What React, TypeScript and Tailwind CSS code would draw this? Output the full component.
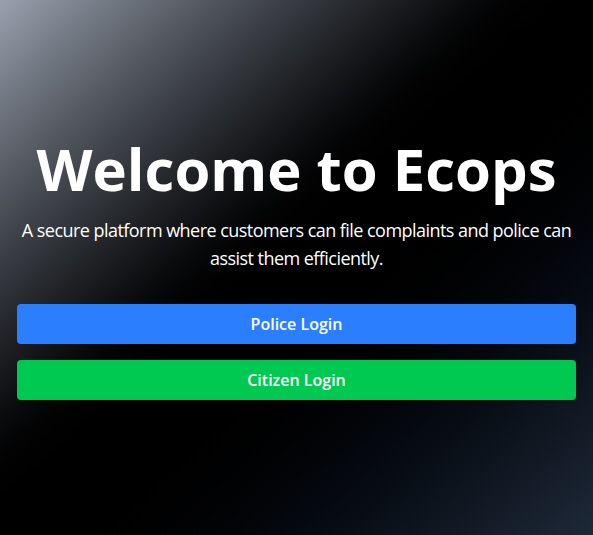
export default function App() {
  return (
    <div
      className="min-h-screen flex flex-col items-center justify-center px-[17px] pt-1 text-white bg-linear-to-br from-gray-400 via-black to-gray-800"
      style={{ fontFamily: '"Open Sans", "Noto Sans", sans-serif' }}
    >
      <h1 className="text-[58px] font-bold leading-none mb-[18px] text-center">
        Welcome to Ecops
      </h1>
      <p className="text-lg leading-7 tracking-[-0.03em] text-center mb-8">
        A secure platform where customers can file complaints and police can
        assist them efficiently.
      </p>
      <div className="w-full flex flex-col gap-4">
        <button
          type="button"
          className="w-full h-10 rounded bg-blue-500 text-white font-semibold"
        >
          Police Login
        </button>
        <button
          type="button"
          className="w-full h-10 rounded bg-green-500 text-white font-semibold"
        >
          Citizen Login
        </button>
      </div>
    </div>
  );
}
